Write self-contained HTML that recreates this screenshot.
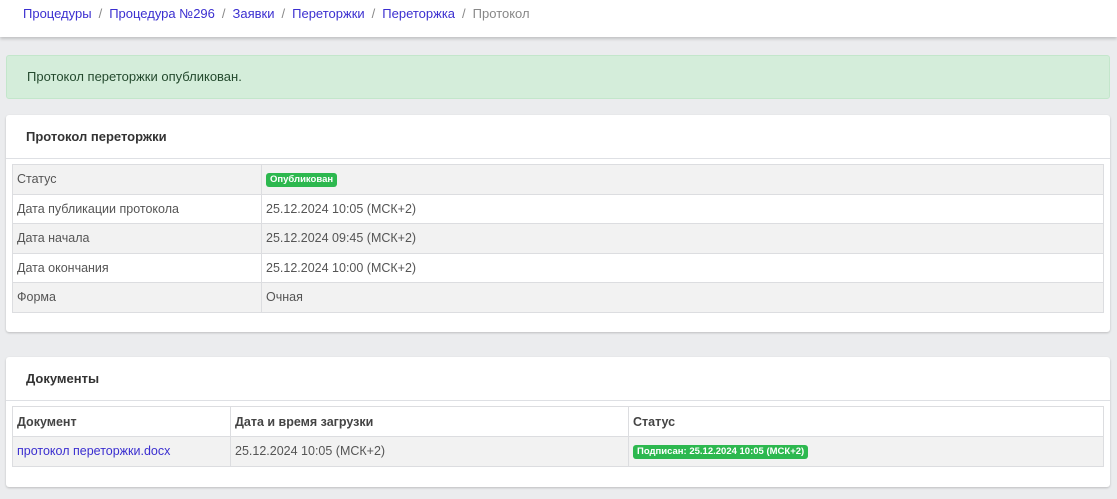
<!DOCTYPE html>
<html><head><meta charset="utf-8"><style>
*{box-sizing:border-box;margin:0;padding:0}
body{width:1117px;height:499px;background:#ebecee;font-family:"Liberation Sans","Noto Sans CJK SC",sans-serif;font-size:12.5px;color:#555;overflow:hidden;position:relative}
.top{position:absolute;left:0;top:0;width:1117px;height:37px;background:#fff;box-shadow:0 2px 3px rgba(0,0,0,.18)}
.bc{position:absolute;left:23px;top:6px;font-size:13px;color:#888}
.bc a{color:#3b2fd0;text-decoration:none}
.bc .s{color:#888;margin:0 7px}
.alert{position:absolute;left:6px;top:55px;width:1104px;height:44px;background:#d4edda;border:1px solid #c3e6cb;border-radius:3px;color:#244a2e;font-size:13px;padding:13px 20px}
.card{position:absolute;left:6px;width:1104px;background:#fff;border-radius:3px;box-shadow:0 1px 2px rgba(0,0,0,.2)}
.card h3{height:44px;border-bottom:1px solid #dee0e4;font-size:13px;font-weight:bold;color:#333;padding:14px 20px}
table{border-collapse:collapse;margin:5px 6px 0;width:1092px}
td,th{border:1px solid #dcdde0;padding:0 4px;text-align:left;vertical-align:middle;height:29.5px;font-weight:normal}
th{font-weight:bold;color:#444;height:30px}
tr.g td{background:#f2f2f2}
.b{display:inline-block;background:#2db84f;color:#fff;font-weight:bold;font-size:9.5px;border-radius:3px;padding:1px 4px;line-height:12px}
a.l{color:#3b2fd0;text-decoration:none}
</style></head><body>
<div class="top"><div class="bc"><a>Процедуры</a><span class="s">/</span><a>Процедура №296</a><span class="s">/</span><a>Заявки</a><span class="s">/</span><a>Переторжки</a><span class="s">/</span><a>Переторжка</a><span class="s">/</span>Протокол</div></div>
<div class="alert">Протокол переторжки опубликован.</div>
<div class="card" style="top:115px;height:217px">
<h3>Протокол переторжки</h3>
<table>
<tr class="g"><td style="width:249px">Статус</td><td><span class="b">Опубликован</span></td></tr>
<tr><td>Дата публикации протокола</td><td>25.12.2024 10:05 (МСК+2)</td></tr>
<tr class="g"><td>Дата начала</td><td>25.12.2024 09:45 (МСК+2)</td></tr>
<tr><td>Дата окончания</td><td>25.12.2024 10:00 (МСК+2)</td></tr>
<tr class="g"><td>Форма</td><td>Очная</td></tr>
</table></div>
<div class="card" style="top:357px;height:130px">
<h3>Документы</h3>
<table>
<tr><th style="width:218px">Документ</th><th style="width:398px">Дата и время загрузки</th><th>Статус</th></tr>
<tr class="g"><td><a class="l">протокол переторжки.docx</a></td><td>25.12.2024 10:05 (МСК+2)</td><td><span class="b">Подписан: 25.12.2024 10:05 (МСК+2)</span></td></tr>
</table></div>
</body></html>
